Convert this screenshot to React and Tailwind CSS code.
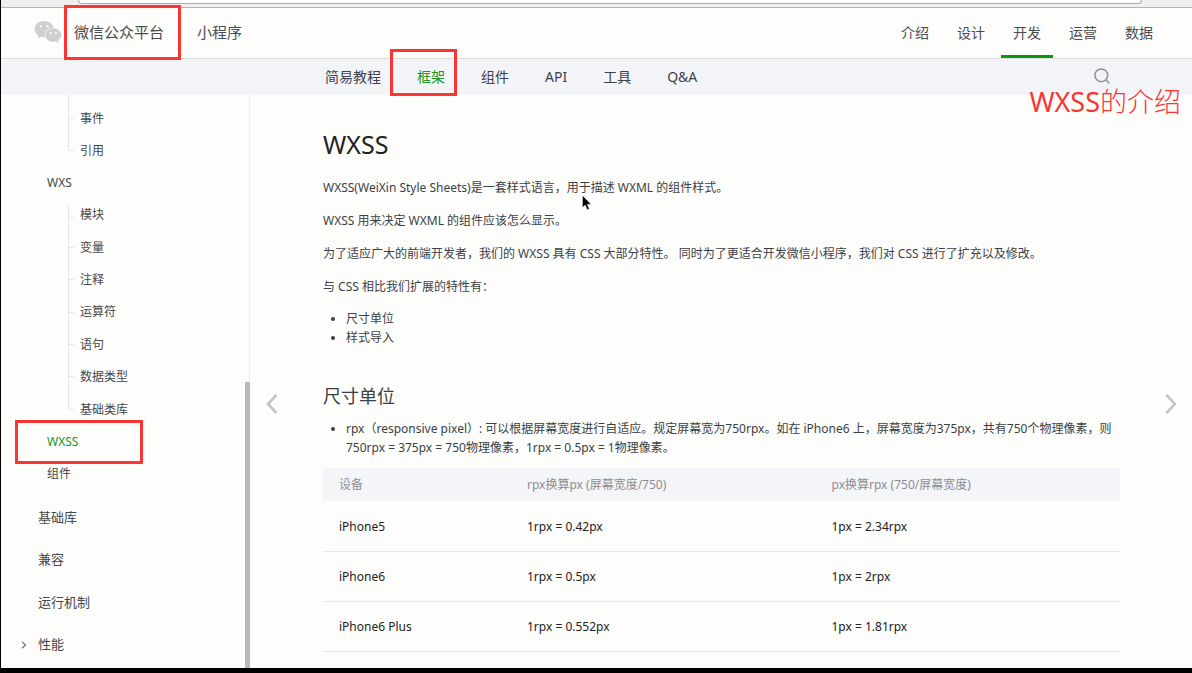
import React from "react";
import { FaWeixin } from "react-icons/fa";

const topNav = ["介绍", "设计", "开发", "运营", "数据"];
const subNav = ["简易教程", "框架", "组件", "API", "工具", "Q&A"];
const wxsItems = ["模块", "变量", "注释", "运算符", "语句", "数据类型", "基础类库"];
const devices = [
  ["iPhone5", "1rpx = 0.42px", "1px = 2.34rpx"],
  ["iPhone6", "1rpx = 0.5px", "1px = 2rpx"],
  ["iPhone6 Plus", "1rpx = 0.552px", "1px = 1.81rpx"],
];

function Highlight({ className }) {
  return (
    <span
      aria-hidden="true"
      className={`pointer-events-none absolute z-10 border-3 border-[#fa3534] ${className}`}
    />
  );
}

function TreeItem({ label, startsBranch, last }) {
  return (
    <li className="flex min-h-8 items-stretch">
      <span aria-hidden="true" className="mr-1.5 flex w-1.5 flex-col">
        <span className={`flex flex-1 ${startsBranch ? "pt-1.5" : ""}`}>
          <span className="flex-1 border-b border-l border-[#e4e5e8]" />
        </span>
        <span className={`flex-1 ${last ? "" : "border-l border-[#e4e5e8]"}`} />
      </span>
      <a href="#" className="flex items-center">
        {label}
      </a>
    </li>
  );
}

function Sidebar() {
  return (
    <aside className="flex w-[249px] shrink-0">
      <nav aria-label="目录" className="flex-1 overflow-hidden text-xs text-[#45484d]">
        <div className="ml-[67px] h-2 border-l border-[#e4e5e8]" />
        <ul className="ml-[67px] grid h-16 auto-rows-fr">
          <TreeItem label="事件" />
          <TreeItem label="引用" last />
        </ul>
        <a href="#" className="flex h-8 items-center pl-[46px]">
          WXS
        </a>
        <ul className="ml-[67px] grid h-[227px] auto-rows-fr">
          {wxsItems.map((label, i) => (
            <TreeItem
              key={label}
              label={label}
              startsBranch={i === 0}
              last={i === wxsItems.length - 1}
            />
          ))}
        </ul>
        <a
          href="#"
          aria-current="page"
          className="relative flex h-8 items-center pl-[46px] text-[#1b951b]"
        >
          WXSS
          <Highlight className="-top-1.5 left-3.5 h-11 w-32" />
        </a>
        <a href="#" className="flex h-8 items-center pl-[46px]">
          组件
        </a>
        <ul className="mt-1.5 grid h-[170px] auto-rows-fr text-[13px]">
          {["基础库", "兼容", "运行机制"].map((label) => (
            <li key={label} className="flex">
              <a href="#" className="flex items-center pl-[37px]">
                {label}
              </a>
            </li>
          ))}
          <li className="flex">
            <a href="#" className="flex items-center pl-5">
              <svg viewBox="0 0 6 8" className="mr-[11px] h-2 w-1.5" fill="none" stroke="#77797c" strokeWidth="1.3">
                <path d="M1 .7 4.5 4 1 7.3" />
              </svg>
              性能
            </a>
          </li>
        </ul>
      </nav>
      <div className="flex w-[5px] flex-col items-end">
        <div className="w-px flex-1 bg-[#ececef]" />
        <div className="w-full flex-1 bg-[#b9b9b9]" />
      </div>
    </aside>
  );
}

function PageArrow({ label, path }) {
  return (
    <button type="button" aria-label={label} className="flex w-11 shrink-0 items-center justify-center pt-11">
      <svg viewBox="0 0 12 20" className="h-5 w-3" fill="none" stroke="#c4c5c6" strokeWidth="2.6">
        <path d={path} />
      </svg>
    </button>
  );
}

function Article() {
  return (
    <article className="min-w-0 flex-1 pt-8 pr-7 pl-[29px] text-xs text-[#3c3f44]">
      <h1 className="mb-[17px] text-[25px] leading-[34px] text-[#222]">WXSS</h1>
      <div className="flex flex-col gap-[13px] leading-5">
        <p className="relative">
          WXSS(WeiXin Style Sheets)是一套样式语言，用于描述 WXML 的组件样式。
          <svg viewBox="0 0 10 16" aria-hidden="true" className="absolute top-[17px] left-[259px] h-4 w-2.5">
            <path
              d="M.5.5v12l2.7-2.5 2 4.7 2-.9-2-4.5h3.9z"
              fill="#000"
              stroke="#fff"
              strokeWidth=".4"
            />
          </svg>
        </p>
        <p>WXSS 用来决定 WXML 的组件应该怎么显示。</p>
        <p>
          为了适应广大的前端开发者，我们的 WXSS 具有 CSS 大部分特性。 同时为了更适合开发微信小程序，我们对 CSS 进行了扩充以及修改。
        </p>
        <p>与 CSS 相比我们扩展的特性有：</p>
      </div>
      <ul className="mt-3 list-disc pl-[23px] leading-[19px]">
        <li>尺寸单位</li>
        <li>样式导入</li>
      </ul>
      <h2 className="mt-9 mb-2.5 text-lg leading-[26px]">尺寸单位</h2>
      <ul className="list-disc pl-[23px] leading-[19px]">
        <li>
          rpx（responsive pixel）: 可以根据屏幕宽度进行自适应。规定屏幕宽为750rpx。如在 iPhone6 上，屏幕宽度为375px，共有750个物理像素，则750rpx = 375px = 750物理像素，1rpx = 0.5px = 1物理像素。
        </li>
      </ul>
      <table className="mt-[11px] w-full table-fixed text-left">
        <colgroup>
          <col className="w-[188px]" />
          <col />
          <col />
        </colgroup>
        <thead className="bg-[#f4f5f8] text-[#8c8e91]">
          <tr className="h-[33px]">
            <th className="px-4 font-normal">设备</th>
            <th className="px-4 font-normal">rpx换算px (屏幕宽度/750)</th>
            <th className="px-4 font-normal">px换算rpx (750/屏幕宽度)</th>
          </tr>
        </thead>
        <tbody className="text-[#222]">
          {devices.map((row) => (
            <tr key={row[0]} className="h-[50px] border-b border-[#e7e8ea]">
              {row.map((cell) => (
                <td key={cell} className="px-4 pt-0.5">
                  {cell}
                </td>
              ))}
            </tr>
          ))}
        </tbody>
      </table>
    </article>
  );
}

export default function App() {
  return (
    <div className="flex h-screen flex-col overflow-hidden border-b-5 border-l border-black bg-[#fdfdfc] font-['Noto_Sans','Noto_Sans_CJK_SC',sans-serif]">
      <div className="h-2 shrink-0 border-b border-[#b4b4b4] bg-[#efefee] pr-[50px] pl-[77px]">
        <div className="h-1 rounded-b-sm border-x border-b border-[#a8a8a8] bg-white" />
      </div>

      <header className="flex h-[51px] shrink-0 items-stretch justify-between border-b border-[#dedfe1] pr-[27px] pl-[33px] text-[#4a4c50]">
        <div className="flex items-center pb-0.5 text-[15px]">
          <FaWeixin className="size-7 text-[#cfcfcf]" />
          <a href="#" className="relative ml-3">
            微信公众平台
            <Highlight className="-top-4 -left-2.5 h-[55px] w-[117px]" />
          </a>
          <span className="ml-4 h-3 w-px bg-[#d0d0d0]" />
          <a href="#" className="ml-4">
            小程序
          </a>
        </div>
        <nav aria-label="主导航" className="flex gap-1 text-sm">
          {topNav.map((label) => (
            <a
              key={label}
              href="#"
              className={`flex w-[52px] items-center justify-center border-b-3 pt-0.5 ${
                label === "开发" ? "border-[#0b960b]" : "border-transparent"
              }`}
            >
              {label}
            </a>
          ))}
        </nav>
      </header>

      <div className="flex h-9 shrink-0 items-center justify-between bg-[#f3f4f7] pr-[82px] pl-[324px] text-sm text-[#3f4247]">
        <nav aria-label="开发文档" className="flex gap-9">
          {subNav.map((label) => (
            <a key={label} href="#" className={`relative ${label === "框架" ? "text-[#1b951b]" : ""}`}>
              {label}
              {label === "框架" && <Highlight className="-top-[18px] -left-[27px] h-[47px] w-[67px]" />}
            </a>
          ))}
        </nav>
        <button type="button" aria-label="搜索" className="relative pb-0.5">
          <svg viewBox="0 0 16 16" className="size-4" fill="none" stroke="#8f9193" strokeWidth="1.5">
            <circle cx="7.3" cy="7.3" r="6.4" />
            <path d="m12 12 3.4 3.4" />
          </svg>
          <span className="absolute top-4 -right-[71px] z-10 text-[27px] leading-9 font-light whitespace-nowrap text-[#fa3534]">
            <span className="font-normal">WXSS</span>的介绍
          </span>
        </button>
      </div>

      <div className="flex min-h-0 flex-1">
        <Sidebar />
        <main className="flex min-w-0 flex-1 overflow-hidden">
          <PageArrow label="上一页" path="M10.5 1 2 10l8.5 9" />
          <Article />
          <PageArrow label="下一页" path="m2.5 1 8.500 9-8.500 9" />
        </main>
      </div>
    </div>
  );
}
